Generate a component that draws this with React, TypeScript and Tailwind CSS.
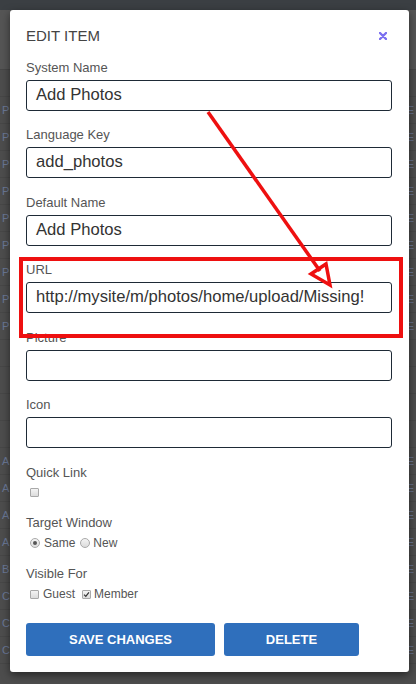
import React from 'react';

const fields = [
    { label: 'System Name', value: 'Add Photos' },
    { label: 'Language Key', value: 'add_photos' },
    { label: 'Default Name', value: 'Add Photos' },
    { label: 'URL', value: 'http://mysite/m/photos/home/upload/Missing!' },
    { label: 'Picture', value: '' },
    { label: 'Icon', value: '' },
];

const bgRows = ['', 'P', 'P', 'P', 'P', 'P', 'P', 'P', 'P', 'P', '', '', '', '', 'A', 'A', 'A', 'A', 'B', 'C', 'C', 'C'];

const Box = ({ checked = false }: { checked?: boolean }) => (
    <span className="inline-flex w-[9px] h-[9px] items-center justify-center rounded-[1px] border border-[#a9a9a9] bg-gradient-to-b from-[#f4f4f4] to-[#dcdcdc]">
        {checked && (
            <svg viewBox="0 0 8 8" className="w-[7px] h-[7px]">
                <path d="M1.2 4.2 L3.2 6.2 L6.8 1.6" fill="none" stroke="#333" strokeWidth="1.4" />
            </svg>
        )}
    </span>
);

const Radio = ({ checked = false }: { checked?: boolean }) => (
    <span className="inline-flex w-[10px] h-[10px] items-center justify-center rounded-full border border-[#a9a9a9] bg-gradient-to-b from-[#f4f4f4] to-[#dcdcdc]">
        {checked && <span className="w-[4px] h-[4px] rounded-full bg-[#555]" />}
    </span>
);

export default function App() {
    return (
        <div className="relative w-[416px] h-[684px] overflow-hidden bg-[#4d4d4d] font-['Liberation_Sans',Arial,sans-serif]">
            {/* dimmed page behind the modal */}
            <div className="h-[10px] bg-[#3b3f43]" />
            <div className="h-[60px] bg-[#555555] border-b border-[#474747]" />
            <div className="flex flex-col">
                {bgRows.map((r, i) => (
                    <div key={i} className="h-[27px] flex items-center justify-between px-[2px] border-b border-[#474747] text-[11px] text-[#6b7896]">
                        <span>{r}</span>
                        <span>{r ? 'E' : ''}</span>
                    </div>
                ))}
            </div>

            {/* modal */}
            <div className="absolute left-[10px] top-[10px] w-[399px] h-[662px] rounded-[3px] bg-white shadow-[0_3px_9px_rgba(0,0,0,0.5)] pl-[16px] pr-[17px] pt-[17px]">
                <div className="flex items-center justify-between h-[17px] text-[15px] leading-[17px] text-[#444]">
                    <span>EDIT ITEM</span>
                    <svg viewBox="0 0 8 8" className="w-[8px] h-[8px] mr-[5px]">
                        <path d="M1 1 L7 7 M7 1 L1 7" stroke="#7b6ff0" strokeWidth="2.4" strokeLinecap="round" />
                    </svg>
                </div>

                {fields.map((f, i) => (
                    <div key={f.label} className={i === 0 ? 'mt-[16px]' : 'mt-[16.4px]'}>
                        <div className="text-[13px] leading-[15px] text-[#555]">{f.label}</div>
                        <div className="mt-[5px] h-[31px] flex items-center rounded-[3px] border border-[#1e2a36] pl-[9px] text-[16.6px] text-[#333] whitespace-nowrap overflow-hidden">
                            {f.value}
                        </div>
                    </div>
                ))}

                <div className="mt-[17px] text-[13px] leading-[15px] text-[#555]">Quick Link</div>
                <div className="mt-[3px] h-[20px] flex items-center pl-[4px]">
                    <Box />
                </div>

                <div className="mt-[12.5px] text-[13px] leading-[15px] text-[#555]">Target Window</div>
                <div className="mt-[3px] h-[20px] flex items-center pl-[4px] text-[12px] text-[#555]">
                    <Radio checked />
                    <span className="ml-[4px]">Same</span>
                    <span className="ml-[5px] flex"><Radio /></span>
                    <span className="ml-[3px]">New</span>
                </div>

                <div className="mt-[13px] text-[13px] leading-[15px] text-[#555]">Visible For</div>
                <div className="mt-[3px] h-[20px] flex items-center pl-[4px] text-[12px] text-[#555]">
                    <Box />
                    <span className="ml-[4px]">Guest</span>
                    <span className="ml-[7px] flex"><Box checked /></span>
                    <span className="ml-[3px]">Member</span>
                </div>

                <div className="mt-[18.5px] flex gap-[9px]">
                    <button className="w-[189px] h-[33px] rounded-[3px] bg-[#2f6fbc] text-white text-[13px] font-bold">SAVE CHANGES</button>
                    <button className="w-[135px] h-[33px] rounded-[3px] bg-[#2f6fbc] text-white text-[13px] font-bold">DELETE</button>
                </div>
            </div>

            {/* red annotation */}
            <div className="absolute left-[19px] top-[257px] w-[384px] h-[81px] border-[4px] border-[#ee1010]" />
            <svg className="absolute left-0 top-0 pointer-events-none" width="416" height="684" viewBox="0 0 416 684">
                <line x1="208" y1="112" x2="320" y2="271" stroke="#ee1010" strokeWidth="3.5" />
                <polygon points="330,285 311,274 326,264" fill="none" stroke="#ee1010" strokeWidth="3.5" strokeLinejoin="miter" />
            </svg>
        </div>
    );
}
